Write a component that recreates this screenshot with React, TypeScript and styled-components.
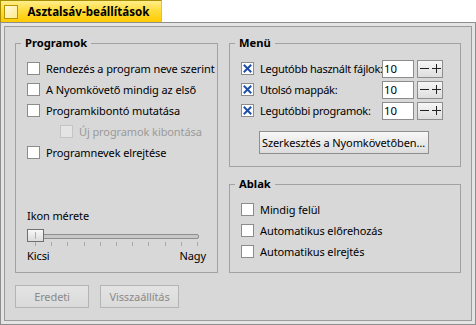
import styled, { createGlobalStyle } from 'styled-components';

const GlobalStyle = createGlobalStyle`
  html, body {
    margin: 0;
    padding: 0;
    background: #ffffff;
  }
  body {
    font-family: "Noto Sans", "DejaVu Sans", sans-serif;
    font-size: 11px;
    letter-spacing: -0.1px;
    color: #000;
  }
`;

// Styled components
const Window = styled.div`
  width: 476px;
  height: 325px;
  display: flex;
  flex-direction: column;
`;

const TabBar = styled.div`
  display: flex;
  height: 22px;
`;

const Tab = styled.div`
  width: 162px;
  box-sizing: border-box;
  display: flex;
  align-items: center;
  padding-left: 3px;
  border: 1px solid #a88f00;
  border-bottom: none;
  border-right-color: #d8c060;
  background: linear-gradient(to bottom, #ffee8c 0%, #ffdc3c 45%, #ffcb00 100%);
`;

const TabIcon = styled.div`
  width: 14px;
  height: 14px;
  box-sizing: border-box;
  border: 1px solid #b89400;
  background: linear-gradient(135deg, #fffbe2, #ffe98a);
  flex-shrink: 0;
`;

const TabTitle = styled.div`
  flex: 1;
  text-align: center;
  font-weight: bold;
  font-size: 11.6px;
  letter-spacing: 0;
  padding-right: 2px;
`;

const Frame = styled.div`
  flex: 1;
  display: flex;
  border: 1px solid #8e8e8e;
  padding: 3px;
  background: #e4e4e4;
`;

const Panel = styled.div`
  flex: 1;
  display: flex;
  flex-direction: column;
  border: 1px solid #9c9c9c;
  background: #d8d8d8;
  padding: 8px 10px 11px 10px;
`;

const Columns = styled.div`
  display: grid;
  grid-template-columns: 203px 232px;
  column-gap: 11px;
  height: 238px;
`;

const RightColumn = styled.div`
  display: flex;
  flex-direction: column;
  gap: 9px;
`;

const Group = styled.fieldset<{ $grow?: boolean }>`
  margin: 0;
  padding: 0 10px 0 11px;
  border: 1px solid #a2a2a2;
  display: flex;
  flex-direction: column;
  min-width: 0;
  ${p => p.$grow ? 'flex: 1;' : ''}
`;

const Legend = styled.legend`
  font-weight: bold;
  font-size: 11.2px;
  letter-spacing: 0;
  line-height: 16px;
  padding: 0 4px;
  margin-left: -6px;
`;

const List = styled.div`
  display: flex;
  flex-direction: column;
  padding-top: 7px;
`;

const CheckRow = styled.label<{ $indent?: boolean; $disabled?: boolean }>`
  display: flex;
  align-items: center;
  height: 21px;
  gap: 6px;
  padding-left: ${p => p.$indent ? '33px' : '0'};
  color: ${p => p.$disabled ? '#9a9a9a' : '#000'};
  white-space: nowrap;
`;

const Box = styled.span<{ $disabled?: boolean }>`
  width: 13px;
  height: 13px;
  box-sizing: border-box;
  border: 1px solid ${p => p.$disabled ? '#c4c4c4' : '#8c8c8c'};
  background: ${p => p.$disabled ? '#e4e4e4' : '#fff'};
  display: flex;
  align-items: center;
  justify-content: center;
  flex-shrink: 0;
`;

const Spacer = styled.div`
  flex: 1;
`;

const SliderBlock = styled.div`
  display: flex;
  flex-direction: column;
  padding-bottom: 8px;
`;

const SliderLabel = styled.div`
  line-height: 16px;
  margin-bottom: 5px;
`;

const SliderArea = styled.div`
  position: relative;
  width: 172px;
  height: 18px;
`;

const Track = styled.div`
  margin-top: 5px;
  height: 3px;
  border: 1px solid #8e8e8e;
  border-radius: 2px;
  background: #c8c8c8;
`;

const Thumb = styled.div`
  position: absolute;
  left: 0;
  top: 0;
  width: 17px;
  height: 13px;
  box-sizing: border-box;
  border: 1px solid #707070;
  background: linear-gradient(to bottom, #f8f8f8, #dcdcdc);
  display: flex;
  justify-content: center;
  &::after {
    content: '';
    width: 1px;
    height: 7px;
    margin-top: 2px;
    background: #b0b0b0;
  }
`;

const Ticks = styled.div`
  display: flex;
  justify-content: space-between;
  padding: 3px 1px 0 8px;
`;

const Tick = styled.span`
  width: 1px;
  height: 4px;
  background: #a8a8a8;
`;

const SliderEnds = styled.div`
  display: flex;
  justify-content: space-between;
  width: 179px;
  line-height: 16px;
  margin-top: 1px;
`;

const MenuList = styled.div`
  display: flex;
  flex-direction: column;
  padding-top: 7px;
`;

const MenuRow = styled.div`
  display: flex;
  align-items: center;
  height: 21px;
`;

const MenuLabel = styled.span`
  width: 122px;
  margin-left: 6px;
  letter-spacing: -0.28px;
  white-space: nowrap;
`;

const NumberField = styled.input`
  width: 32px;
  height: 18px;
  box-sizing: border-box;
  border: 1px solid #8c8c8c;
  background: #fff;
  font: inherit;
  font-size: 11.4px;
  padding: 0 1px;
  outline: none;
`;

const Stepper = styled.div`
  width: 26px;
  height: 18px;
  margin-left: 3px;
  box-sizing: border-box;
  border: 1px solid #8e8e8e;
  background: linear-gradient(to bottom, #f6f6f6, #dedede);
  display: flex;
  align-items: center;
  justify-content: center;
  gap: 3px;
`;

const ButtonRow = styled.div`
  display: flex;
  justify-content: center;
  padding: 10px 4px 12px 0;
`;

const Button = styled.button<{ $width: number }>`
  width: ${p => p.$width}px;
  height: 23px;
  box-sizing: border-box;
  border: 1px solid ${p => p.disabled ? '#b4b4b4' : '#8e8e8e'};
  background: ${p => p.disabled
    ? 'linear-gradient(to bottom, #e4e4e4, #dadada)'
    : 'linear-gradient(to bottom, #f8f8f8, #dcdcdc)'};
  color: ${p => p.disabled ? '#8a8a8a' : '#000'};
  font-family: "Noto Sans", "DejaVu Sans", sans-serif;
  font-size: 11px;
  letter-spacing: -0.1px;
  white-space: nowrap;
  padding: 0;
`;

const Footer = styled.div`
  display: flex;
  gap: 11px;
  margin-top: 12px;
`;

const Cross = () => (
  <svg width="11" height="11" viewBox="0 0 11 11">
    <path d="M2.5 2.5 L8.5 8.5 M8.5 2.5 L2.5 8.5" stroke="#1f4fa8" strokeWidth="2" strokeLinecap="square" />
  </svg>
);

const StepGlyph = ({ plus }: { plus?: boolean }) => (
  <svg width="9" height="9" viewBox="0 0 9 9">
    <path d={plus ? 'M0 4.5 H9 M4.5 0 V9' : 'M0 4.5 H9'} stroke="#222" strokeWidth="1" />
  </svg>
);

const Check = ({ label, checked, indent, disabled }: { label: string; checked?: boolean; indent?: boolean; disabled?: boolean }) => (
  <CheckRow $indent={indent} $disabled={disabled}>
    <Box $disabled={disabled}>{checked && <Cross />}</Box>
    {label}
  </CheckRow>
);

const menuItems = ['Legutóbb használt fájlok:', 'Utolsó mappák:', 'Legutóbbi programok:'];

const App = () => {
  return (
    <Window>
      <GlobalStyle />
      <TabBar>
        <Tab>
          <TabIcon />
          <TabTitle>Asztalsáv-beállítások</TabTitle>
        </Tab>
      </TabBar>
      <Frame>
        <Panel>
          <Columns>
            <Group>
              <Legend>Programok</Legend>
              <List>
                <Check label="Rendezés a program neve szerint" />
                <Check label="A Nyomkövető mindig az első" />
                <Check label="Programkibontó mutatása" />
                <Check label="Új programok kibontása" indent disabled />
                <Check label="Programnevek elrejtése" />
              </List>
              <Spacer />
              <SliderBlock>
                <SliderLabel>Ikon mérete</SliderLabel>
                <SliderArea>
                  <Track />
                  <Ticks>
                    {Array.from({ length: 11 }, (_, i) => <Tick key={i} />)}
                  </Ticks>
                  <Thumb />
                </SliderArea>
                <SliderEnds>
                  <span>Kicsi</span>
                  <span>Nagy</span>
                </SliderEnds>
              </SliderBlock>
            </Group>
            <RightColumn>
              <Group>
                <Legend>Menü</Legend>
                <MenuList>
                  {menuItems.map(item => (
                    <MenuRow key={item}>
                      <Box><Cross /></Box>
                      <MenuLabel>{item}</MenuLabel>
                      <NumberField defaultValue="10" />
                      <Stepper><StepGlyph /><StepGlyph plus /></Stepper>
                    </MenuRow>
                  ))}
                </MenuList>
                <ButtonRow>
                  <Button $width={170}>Szerkesztés a Nyomkövetőben…</Button>
                </ButtonRow>
              </Group>
              <Group $grow>
                <Legend>Ablak</Legend>
                <List>
                  <Check label="Mindig felül" />
                  <Check label="Automatikus előrehozás" />
                  <Check label="Automatikus elrejtés" />
                </List>
              </Group>
            </RightColumn>
          </Columns>
          <Footer>
            <Button $width={74} disabled>Eredeti</Button>
            <Button $width={79} disabled>Visszaállítás</Button>
          </Footer>
        </Panel>
      </Frame>
    </Window>
  );
};

export default App;
